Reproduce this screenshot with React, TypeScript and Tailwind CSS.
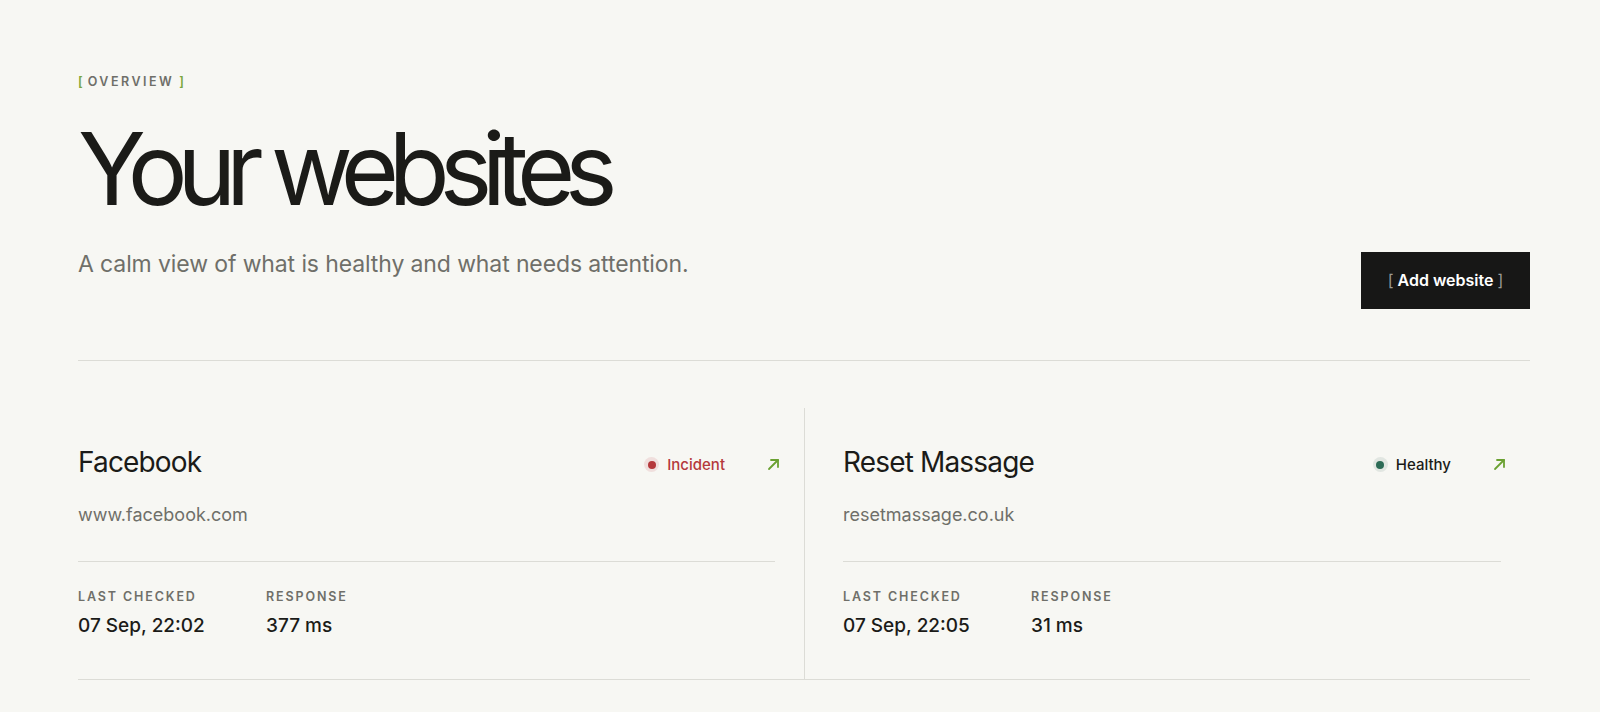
type Site = {
  name: string;
  url: string;
  status: "incident" | "healthy";
  lastChecked: string;
  response: string;
};

const sites: Site[] = [
  {
    name: "Facebook",
    url: "www.facebook.com",
    status: "incident",
    lastChecked: "07 Sep, 22:02",
    response: "377 ms",
  },
  {
    name: "Reset Massage",
    url: "resetmassage.co.uk",
    status: "healthy",
    lastChecked: "07 Sep, 22:05",
    response: "31 ms",
  },
];

function ArrowIcon() {
  return (
    <svg
      width="13"
      height="13"
      viewBox="0 0 13 13"
      fill="none"
      stroke="#6aa131"
      strokeWidth="1.8"
      strokeLinecap="round"
      strokeLinejoin="round"
      className="mr-[-5px]"
    >
      <path d="M2 11 L11 2" />
      <path d="M4 2 H11 V9" />
    </svg>
  );
}

function StatusBadge({ status }: { status: Site["status"] }) {
  if (status === "incident") {
    return (
      <span className="flex items-center gap-[8px] text-[15px] font-medium text-[#b5393c]">
        <span className="flex h-[15px] w-[15px] items-center justify-center rounded-full bg-[#f0dfdd]">
          <span className="h-[8px] w-[8px] rounded-full bg-[#b5393c]" />
        </span>
        Incident
      </span>
    );
  }

  return (
    <span className="flex items-center gap-[8px] text-[15px] font-medium text-[#1b1b18]">
      <span className="flex h-[15px] w-[15px] items-center justify-center rounded-full bg-[#e1e6e1]">
        <span className="h-[8px] w-[8px] rounded-full bg-[#2c6b55]" />
      </span>
      Healthy
    </span>
  );
}

function SiteCard({ site, first }: { site: Site; first: boolean }) {
  return (
    <article
      className={
        first
          ? "pb-[39px] pr-[29px] pt-[33px]"
          : "border-l border-[#dcdcd6] pb-[39px] pl-[38px] pr-[29px] pt-[33px]"
      }
    >
      <div className="flex items-center justify-between">
        <h2 className="text-[28px] font-normal tracking-[-0.03em] text-[#1b1b18]">
          {site.name}
        </h2>

        <div className="mt-[6px] flex items-center gap-[42px]">
          <StatusBadge status={site.status} />
          <ArrowIcon />
        </div>
      </div>

      <p className="mt-[18px] text-[18px] text-[#6f6f69]">{site.url}</p>

      <div className="mt-[33px] border-t border-[#dcdcd6]" />

      <div className="mt-[26px] flex">
        <div className="w-[188px]">
          <p className="text-[12.5px] font-semibold uppercase tracking-[0.15em] text-[#6f6f69]">
            Last checked
          </p>
          <p className="mt-[5px] text-[19px] font-medium text-[#1b1b18]">
            {site.lastChecked}
          </p>
        </div>

        <div>
          <p className="text-[12.5px] font-semibold uppercase tracking-[0.15em] text-[#6f6f69]">
            Response
          </p>
          <p className="mt-[5px] text-[19px] font-medium text-[#1b1b18]">
            {site.response}
          </p>
        </div>
      </div>
    </article>
  );
}

export default function App() {
  return (
    <main className="min-h-screen bg-[#f7f7f3] pl-[78px] pr-[70px] pt-[73px] font-['Inter',sans-serif] text-[#1b1b18] antialiased">
      <p className="flex items-center gap-[5px] text-[12.5px] font-semibold uppercase text-[#6f6f69]">
        <span className="text-[#7aa63d]">[</span>
        <span className="tracking-[0.2em]">Overview</span>
        <span className="text-[#7aa63d]">]</span>
      </p>

      <h1 className="mt-[27px] text-[100px] font-normal leading-[1] tracking-[-0.104em] text-[#1b1b18]">
        Your websites
      </h1>

      <div className="mt-[29px] flex items-start justify-between pb-[51px]">
        <p className="text-[23px] leading-[32px] tracking-[-0.005em] text-[#6f6f69]">
          A calm view of what is healthy and what needs attention.
        </p>

        <button
          type="button"
          className="mt-[4px] h-[57px] w-[169px] bg-[#171716] text-[16px] font-semibold text-white"
        >
          <span className="font-normal text-[#9a9a95]">[</span> Add website{" "}
          <span className="font-normal text-[#9a9a95]">]</span>
        </button>
      </div>

      <div className="border-t border-[#dcdcd6]" />

      <section className="mt-[47px] grid grid-cols-2 border-b border-[#dcdcd6]">
        {sites.map((site, index) => (
          <SiteCard key={site.name} site={site} first={index === 0} />
        ))}
      </section>
    </main>
  );
}
